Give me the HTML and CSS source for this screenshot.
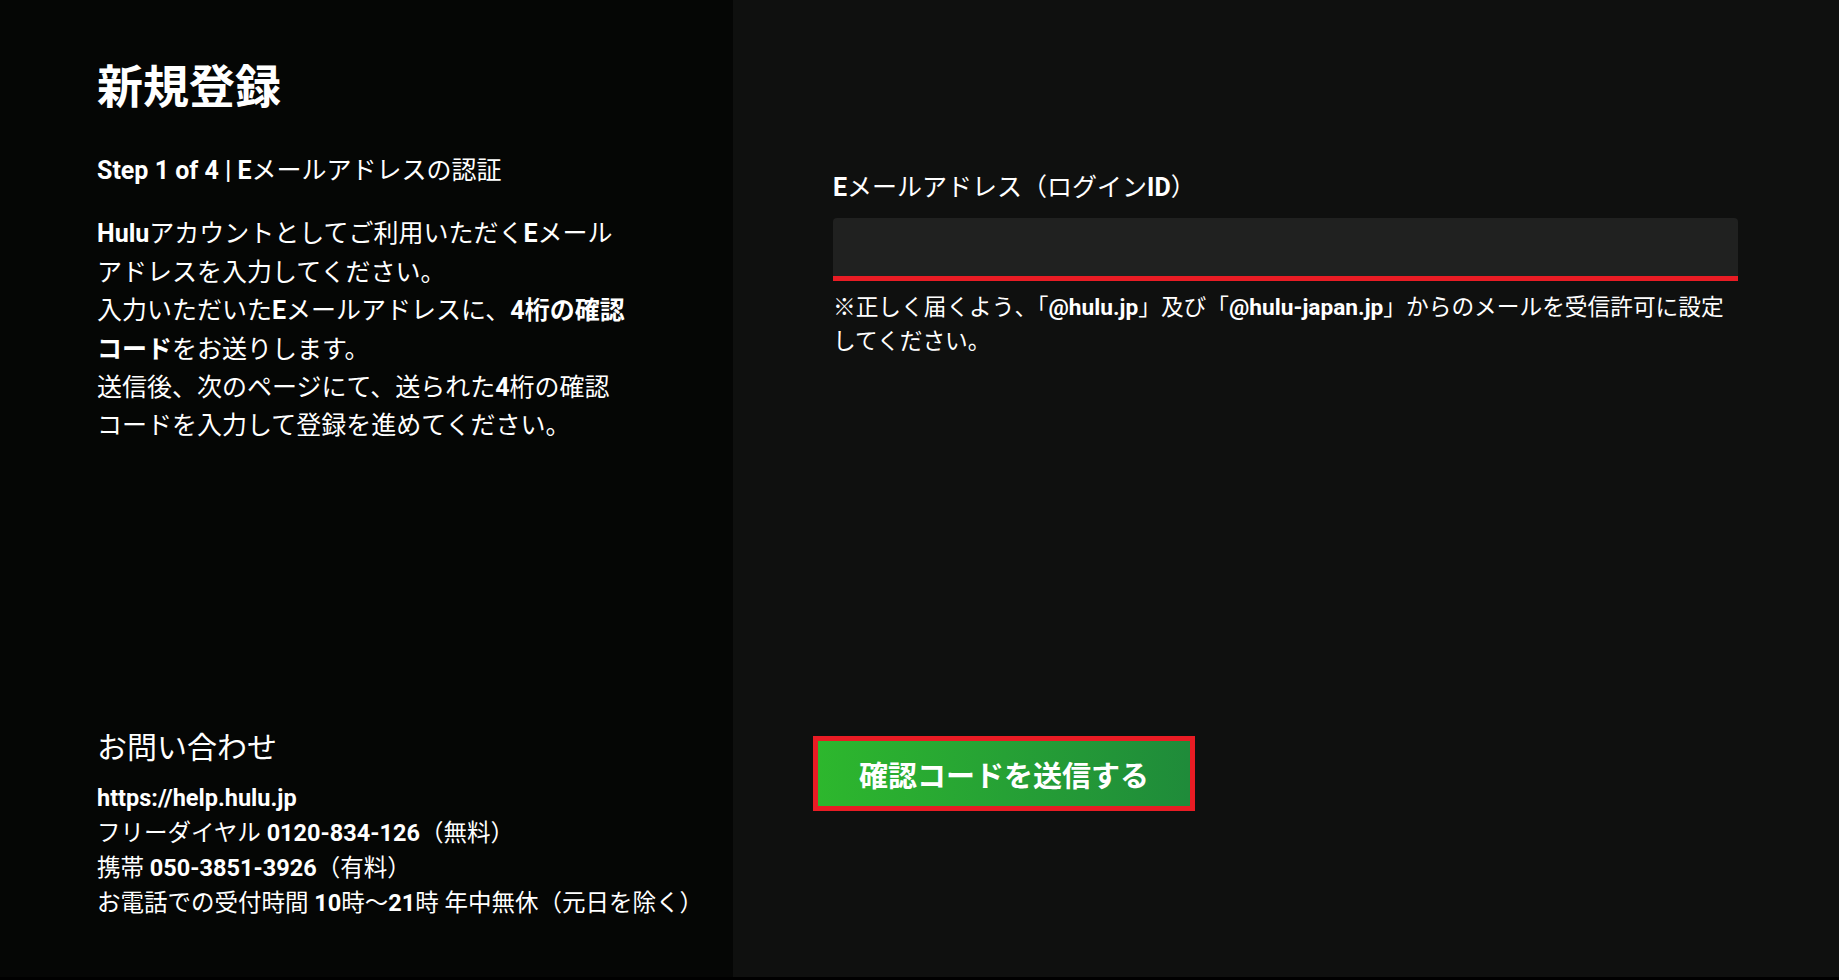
FILE: index.html
```html
<!DOCTYPE html>
<html lang="ja">
<head>
<meta charset="utf-8">
<title>新規登録 | Hulu</title>
<link rel="stylesheet" href="styles.css">
</head>
<body>
<div class="page">
  <aside class="intro">
    <div class="intro-top">
      <h1 class="title">新規登録</h1>
      <p class="step"><b>Step 1 of 4 | E</b>メールアドレスの認証</p>
      <p class="desc"><b>Hulu</b>アカウントとしてご利用いただく<b>E</b>メール<br>アドレスを入力してください。<br>入力いただいた<b>E</b>メールアドレスに、<b>4桁の確認<br>コード</b>をお送りします。<br>送信後、次のページにて、送られた<b>4</b>桁の確認<br>コードを入力して登録を進めてください。</p>
    </div>
    <div class="contact">
      <h2 class="contact-title">お問い合わせ</h2>
      <ul class="contact-list">
        <li><b>https://help.hulu.jp</b></li>
        <li>フリーダイヤル <b>0120-834-126</b>（無料）</li>
        <li>携帯 <b>050-3851-3926</b>（有料）</li>
        <li>お電話での受付時間 <b>10</b>時〜<b>21</b>時 年中無休（元日を除く）</li>
      </ul>
    </div>
  </aside>
  <main class="form-area">
    <form class="form">
      <label class="field-label" for="email"><b>E</b>メールアドレス（ログイン<b>ID</b>）</label>
      <input class="field-input" id="email" type="email">
      <p class="field-note">※正しく届くよう、「<b>@hulu.jp</b>」及び「<b>@hulu-japan.jp</b>」からのメールを受信許可に設定<br>してください。</p>
      <button class="submit" type="button">確認コードを送信する</button>
    </form>
  </main>
</div>
</body>
</html>
```

FILE: styles.css
```css
* {
  box-sizing: border-box;
}

html, body {
  margin: 0;
  padding: 0;
  background: #000;
}

body {
  font-family: Roboto, "Noto Sans CJK JP", sans-serif;
  color: #fff;
  overflow: hidden;
}

b {
  font-weight: 700;
}

.page {
  display: flex;
  height: 977px;
}

.intro {
  width: 733px;
  flex: none;
  background: #050605;
  padding: 60px 0 56px 97px;
  display: flex;
  flex-direction: column;
  justify-content: space-between;
}

.title {
  margin: 0;
  font-size: 46px;
  line-height: 55px;
  font-weight: 700;
}

.step {
  margin: 37px 0 0;
  font-size: 25px;
  line-height: 38.4px;
}

.desc {
  margin: 25px 0 0;
  font-size: 25px;
  line-height: 38.4px;
  white-space: nowrap;
}

.contact-title {
  margin: 0;
  font-size: 30px;
  line-height: 41px;
  font-weight: 400;
}

.contact-list {
  list-style: none;
  margin: 13px 0 0;
  padding: 0;
  font-size: 23.5px;
  line-height: 35px;
  white-space: nowrap;
}

.form-area {
  flex: 1;
  background: #0f100f;
  padding: 169px 101px 0 100px;
}

.form {
  display: flex;
  flex-direction: column;
  align-items: flex-start;
}

.field-label {
  font-size: 25px;
  line-height: 38.4px;
}

.field-input {
  display: block;
  width: 100%;
  height: 63px;
  margin-top: 11px;
  background: #202120;
  border: 0;
  border-bottom: 5px solid #e91c24;
  border-radius: 4px 4px 0 0;
  outline: none;
  color: #fff;
  font: inherit;
  font-size: 24px;
  padding: 0 16px;
}

.field-note {
  margin: 10px 0 0;
  font-size: 22.7px;
  line-height: 34px;
}

.submit {
  margin: 377px 0 0 -20px;
  width: 382px;
  height: 75px;
  border: 5px solid #e91c24;
  background: linear-gradient(90deg, #2db72d 0%, #26a135 50%, #1f8b3a 100%);
  color: #fff;
  font-family: Roboto, "Noto Sans CJK JP", sans-serif;
  font-size: 29px;
  font-weight: 700;
  cursor: pointer;
  padding: 0;
}
```
